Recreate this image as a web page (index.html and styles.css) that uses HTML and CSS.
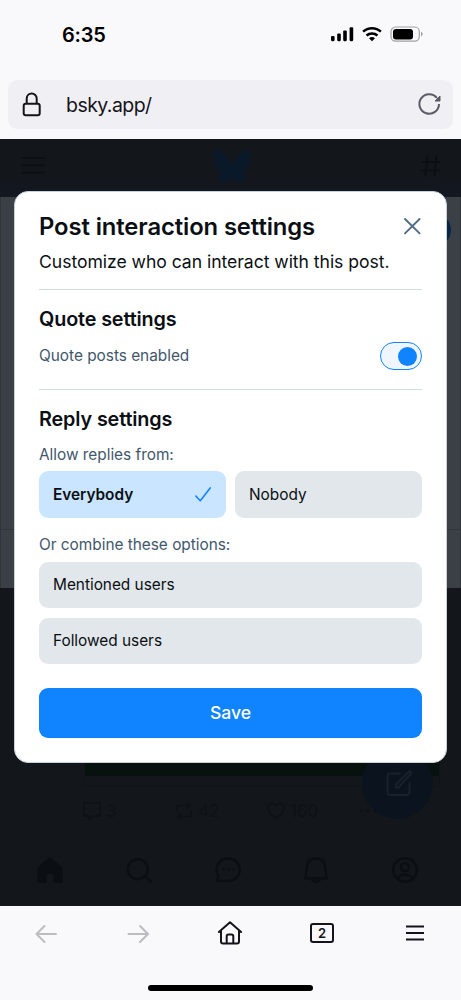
FILE: index.html
```html
<!DOCTYPE html>
<html lang="en">
<head>
<meta charset="utf-8">
<title>Post interaction settings</title>
<link rel="stylesheet" href="styles.css">
</head>
<body>
<div class="screen">
  <header class="browser-top">
    <div class="status">
      <span class="clock">6:35</span>
      <svg class="status-icons" width="94" height="18" viewBox="0 0 94 18">
        <g fill="#000"><rect x="1" y="11" width="3.600" height="5.200" rx="1.100"/><rect x="7.200" y="8.400" width="3.600" height="7.800" rx="1.100"/><rect x="13.200" y="5.400" width="3.600" height="10.800" rx="1.100"/><rect x="19.600" y="2.200" width="3.600" height="14" rx="1.100"/></g>
        <g fill="none" stroke="#000" stroke-width="2.500"><path d="M33.100 6.700A13 13 0 0 1 50.900 6.700"/><path d="M36.500 10.500A8.200 8.200 0 0 1 47.500 10.500"/></g>
        <path d="M39 13.200a4.600 4.600 0 0 1 6 0L42 16.300z" fill="#000"/>
        <rect x="61" y="2" width="28.300" height="14.200" rx="4.600" fill="none" stroke="#a0a0a3" stroke-width="1.200"/>
        <rect x="63" y="4" width="20" height="10.500" rx="3" fill="#000"/>
        <path d="M91 6.700q1.700.7 1.700 2.300T91 11.300z" fill="#a0a0a3"/>
      </svg>
    </div>
    <div class="address">
      <svg width="20" height="26" viewBox="0 0 20 26" fill="none" stroke="#15141a" stroke-width="2"><rect x="1.700" y="11.700" width="16" height="11.500" rx="2"/><path d="M4.700 11.500V6.600a5 5 0 0 1 10 0v4.900"/></svg>
      <span class="url">bsky.app/</span>
      <svg class="reload" width="24" height="24" viewBox="0 0 24 24" fill="none" stroke="#5b5b66" stroke-width="2"><path d="M19.900 5.900A9.800 9.800 0 1 0 22 12"/><path d="M23 4v5h-5z" fill="#5b5b66" stroke-width="1" stroke-linejoin="round"/></svg>
    </div>
  </header>

  <main class="page">
    <div class="topbar">
      <svg width="24" height="24" viewBox="0 0 24 24" stroke="#0c0f13" stroke-width="2" stroke-linecap="round"><path d="M1 4h22M1 11.300h22M1 18.500h22"/></svg>
      <svg width="36" height="32" viewBox="0 0 36 32" fill="#0a192a"><path d="M7.800 2.200C12 5.300 16.400 11.500 18 14.900 19.600 11.500 24 5.300 28.200 2.200 31.200 0 36-1.800 36 4c0 1.200-.7 9.600-1.100 11-1.300 4.800-6.200 6-10.600 5.300 7.600 1.300 9.500 5.600 5.400 9.900-5.900 4.200-10.400 1-11.700-4.600-1.300 5.600-5.800 8.800-11.700 4.600-4.100-4.300-2.200-8.600 5.400-9.900C7.300 21 2.400 19.800 1.100 15 .7 13.600 0 5.200 0 4c0-5.800 4.800-4 7.800-1.800z"/></svg>
      <svg width="24" height="24" viewBox="0 0 24 24" fill="none" stroke="#0c0f13" stroke-width="1.900" stroke-linecap="round"><path d="M4.500 8h17M3.500 16.500h17M9.500 2l-2 19.500M18.500 2l-2 19.500"/></svg>
    </div>
    <div class="composer"><span class="post-pill"></span><div class="composer-foot"></div></div>
    <div class="feed">
      <div class="media"></div>
      <div class="actions">
        <span><svg width="20" height="20" viewBox="0 0 20 20" fill="none" stroke="#0e1216" stroke-width="1.700"><path d="M2 2h16v13h-7l-4 3v-3H2z"/></svg>3</span>
        <span><svg width="20" height="20" viewBox="0 0 20 20" fill="none" stroke="#0e1216" stroke-width="1.700"><path d="M3 10V4.500h13M13 1.500l3 3-3 3M17 9v6.500H4M7 12.500l-3 3 3 3"/></svg>42</span>
        <span><svg width="20" height="20" viewBox="0 0 20 20" fill="none" stroke="#0e1216" stroke-width="1.700"><path d="M10 17C4.500 13.800 2 10.600 2 7.100 2 2.600 7.200 1 10 4.400 12.800 1 18 2.600 18 7.100c0 3.500-2.500 6.700-8 9.900z"/></svg>160</span>
        <span><svg width="20" height="20" viewBox="0 0 20 20" fill="#0e1216"><circle cx="3" cy="10" r="1.600"/><circle cx="10" cy="10" r="1.600"/><circle cx="17" cy="10" r="1.600"/></svg></span>
      </div>
      <nav class="tabs">
        <svg width="28" height="28" viewBox="0 0 28 28" fill="#0b0e12"><path d="M14 1l11.500 9.500q1 .8 1 2V27h-9v-7q0-2-2-2h-3q-2 0-2 2v7h-9V12.500q0-1.200 1-2z"/></svg>
        <svg width="28" height="28" viewBox="0 0 28 28" fill="none" stroke="#0b0e12" stroke-width="2.400"><circle cx="12.800" cy="13.200" r="10"/><path d="M20 20.500l6 5" stroke-linecap="round"/></svg>
        <svg width="28" height="28" viewBox="0 0 28 28" fill="none" stroke="#0b0e12" stroke-width="2.400"><path d="M14.500 2.500a11.200 11.200 0 1 1 0 22.400H3l1.500-5a11.200 11.200 0 0 1 10-17.400z"/><path d="M8.500 13.500h2M13.500 13.500h2M18.500 13.500h2"/></svg>
        <svg width="28" height="28" viewBox="0 0 28 28" fill="none" stroke="#0b0e12" stroke-width="2.400"><path d="M5 12q0-9.500 9-9.500t9 9.500l1.700 10.300H3.300zM9 22.500q5 7 10 0"/></svg>
        <svg width="28" height="28" viewBox="0 0 28 28" fill="none" stroke="#0b0e12" stroke-width="2.400"><circle cx="14" cy="14" r="11.800"/><circle cx="14" cy="11" r="4"/><path d="M6 22.500q8-7.500 16 0"/></svg>
      </nav>
    </div>
    <div class="fab"><svg width="30" height="30" viewBox="0 0 30 30" fill="none" stroke="#19212b" stroke-width="2" stroke-linecap="round"><path d="M17 4.500H7.500q-3 0-3 3V23q0 3 3 3h16q3 0 3-3V14"/><path d="M13 18.500v-3L26.500 2l2 2L15.500 18.500z"/></svg></div>

    <section class="dialog">
      <div class="title-row">
        <h1>Post interaction settings</h1>
        <svg width="20" height="20" viewBox="0 0 20 20" stroke="#526b86" stroke-width="1.900" stroke-linecap="round"><path d="M3 2l14.600 14.400M17.600 2L3 16.400"/></svg>
      </div>
      <p class="lead">Customize who can interact with this post.</p>
      <hr>
      <h2>Quote settings</h2>
      <div class="toggle-row"><span class="label">Quote posts enabled</span><span class="toggle"><span class="knob"></span></span></div>
      <hr class="second">
      <h2>Reply settings</h2>
      <p class="label replies">Allow replies from:</p>
      <div class="pair">
        <div class="option selected"><span class="everybody">Everybody</span><svg width="18" height="18" viewBox="0 0 18 18" fill="none" stroke="#1083fe" stroke-width="1.600" stroke-linecap="round" stroke-linejoin="round"><path d="M1.800 10l4.500 4.700L16.200 1.900"/></svg></div>
        <div class="option">Nobody</div>
      </div>
      <p class="label combine">Or combine these options:</p>
      <div class="stack">
        <div class="option">Mentioned users</div>
        <div class="option">Followed users</div>
      </div>
      <div class="save">Save</div>
    </section>
  </main>

  <footer class="browser-bottom">
    <div class="toolbar">
      <svg width="24" height="24" viewBox="0 0 24 24" fill="none" stroke="#bdbdc0" stroke-width="2" stroke-linecap="round" stroke-linejoin="round"><path d="M22 13H2.500M10.500 5l-8 8 8 8"/></svg>
      <svg width="24" height="24" viewBox="0 0 24 24" fill="none" stroke="#bdbdc0" stroke-width="2" stroke-linecap="round" stroke-linejoin="round"><path d="M2.500 13H22M14 5l8 8-8 8"/></svg>
      <svg width="26" height="26" viewBox="0 0 26 26" fill="none" stroke="#15141a" stroke-width="2" stroke-linecap="round" stroke-linejoin="round"><path d="M1.900 12L13 2.300 24.100 12M4 10.500v11q0 2 2 2h14q2 0 2-2v-11M9.700 23.300v-7q0-1.800 1.800-1.800h3q1.800 0 1.800 1.800v7"/></svg>
      <span class="tab-count">2</span>
      <svg width="20" height="18" viewBox="0 0 20 18" stroke="#15141a" stroke-width="2"><path d="M1 2.500h18M1 9h18M1 15.500h18"/></svg>
    </div>
    <div class="home-bar"></div>
  </footer>
</div>
</body>
</html>
```

FILE: styles.css
```css
* { box-sizing: border-box; }
body { margin: 0; font-family: Inter, "Liberation Sans", sans-serif; color: #0b0f14; }
h1, h2, p { margin: 0; font-weight: 400; white-space: nowrap; }
svg { display: block; flex: none; }
.screen { width: 461px; height: 1000px; display: flex; flex-direction: column; overflow: hidden; background: #f9f9fb; }

.browser-top { height: 139px; padding: 0 8px; }
.status { height: 80px; padding: 25px 29px 0 54px; display: flex; justify-content: space-between; align-items: flex-start; }
.clock { font-size: 20px; line-height: 20px; font-weight: 600; color: #000; letter-spacing: -0.2px; }
.address { height: 49px; border-radius: 9px; background: #f0eff4; padding: 0 12px 0 14px; display: flex; align-items: center; }
.url { font-size: 19.5px; color: #15141a; margin-left: 24px; letter-spacing: -0.55px; }
.reload { margin-left: auto; margin-top: -2px; }

.page { height: 767px; position: relative; background: #13171b; }
.topbar { height: 58px; padding: 11px 19px 0 21px; display: flex; justify-content: space-between; align-items: flex-start; background: linear-gradient(#13171b 60%, #131821); }
.topbar svg:nth-child(1), .topbar svg:nth-child(3) { margin-top: 4px; }
.composer { height: 391px; background: #3b4046; border: solid #30353b; border-width: 0 1px; display: flex; flex-direction: column; justify-content: space-between; align-items: flex-end; }
.post-pill { width: 70px; height: 34px; margin: 16px 9px 0 0; border-radius: 17px; background: #092445; }
.composer-foot { width: 100%; height: 59px; border-top: 1px solid #31363c; }
.feed { height: 318px; padding-top: 150px; }
.media { width: 356px; height: 49px; margin-left: 84px; background: #07120f; border-bottom: 11px solid #13171b; outline: 1px solid #101418; outline-offset: -1px; }
.actions { height: 48px; padding: 0 0 0 82px; display: grid; grid-template-columns: 92px 92px 92px 20px; align-items: center; font-size: 17px; color: #0e1216; }
.actions span { display: flex; gap: 4px; align-items: center; }
.tabs { height: 71px; padding: 21px 42px 0 36px; display: flex; justify-content: space-between; }
.fab { position: absolute; left: 362px; top: 609px; width: 71px; height: 71px; border-radius: 50%; background: #0b131e; display: grid; place-items: center; }

.dialog { position: absolute; left: 14px; top: 52px; width: 433px; height: 572px; padding: 20px 24px 0; background: #fff; border: 1px solid #c8d1da; border-radius: 14px; }
.title-row { height: 30px; display: flex; justify-content: space-between; align-items: center; }
.title-row h1 { font-size: 23.8px; line-height: 30px; font-weight: 600; letter-spacing: -0.1px; }
.lead { margin-top: 8px; font-size: 17.6px; line-height: 24px; letter-spacing: -0.045px; }
hr { height: 1px; border: 0; background: #d4dbe2; margin: 15px 0 17px; }
h2 { font-size: 19.8px; line-height: 24px; font-weight: 600; letter-spacing: -0.13px; }
.toggle-row { margin-top: 11px; height: 28px; display: flex; justify-content: space-between; align-items: center; }
.label { font-size: 15.4px; line-height: 20px; color: #42576c; letter-spacing: -0.02px; }
.toggle { width: 42px; height: 28px; border: 1px solid #1083fe; border-radius: 14px; background: #f0f6ff; padding: 0 4px; display: flex; justify-content: flex-end; align-items: center; }
.knob { width: 19px; height: 19px; border-radius: 50%; background: #1083fe; }
hr.second { margin: 19px 0 17px; }
.replies { margin-top: 14px; }
.pair { margin-top: 6px; display: grid; grid-template-columns: 1fr 1fr; gap: 9px; }
.option { height: 47px; padding: 0 14px; border-radius: 9px; background: #e2e7eb; font-size: 15.4px; letter-spacing: -0.02px; display: flex; align-items: center; justify-content: space-between; }
.selected { background: #cae5ff; font-weight: 600; }
.combine { margin-top: 17px; }
.stack { margin-top: 6.500px; display: grid; gap: 9.500px; }
.stack .option { height: 46.500px; }
.save { margin-top: 23.500px; height: 50.500px; border-radius: 9px; background: #1083fe; color: #fff; font-size: 17.6px; font-weight: 500; display: grid; place-items: center; }

.browser-bottom { height: 94px; }
.toolbar { height: 54px; padding: 0 36px 0 34px; display: grid; grid-template-columns: 92px 91px 93px 95px 20px; align-items: center; }
.tab-count { width: 24px; height: 20px; border: 2px solid #15141a; border-radius: 3px; display: grid; place-items: center; font-size: 13px; line-height: 14px; font-weight: 600; color: #15141a; }
.home-bar { width: 165px; height: 6px; margin: 25px auto 0; border-radius: 3px; background: #000; }
```
